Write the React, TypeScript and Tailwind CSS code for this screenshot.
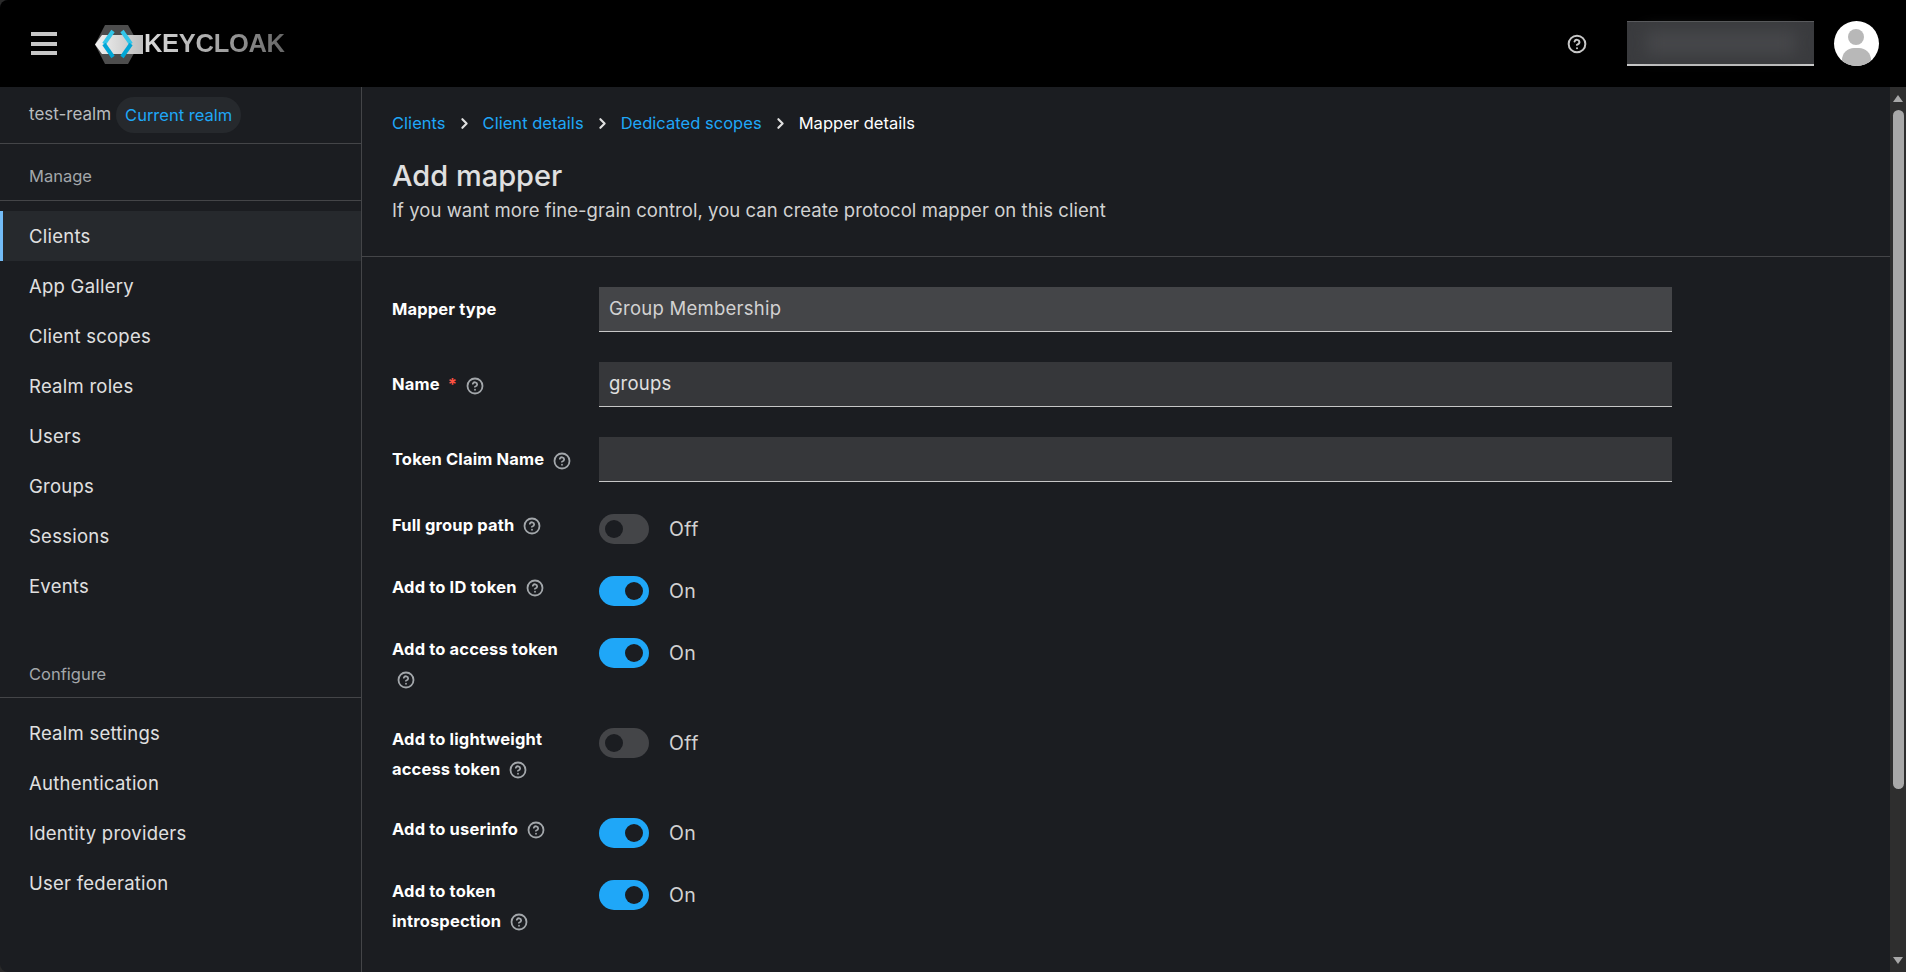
import { CircleHelp, ChevronRight } from "lucide-react";

const font = { fontFamily: "Inter, 'Noto Sans', sans-serif" };

const manageLinks = ["Clients", "App Gallery", "Client scopes", "Realm roles", "Users", "Groups", "Sessions", "Events"];
const configureLinks = ["Realm settings", "Authentication", "Identity providers", "User federation"];

function Logo() {
  return (
    <div className="flex items-center">
      <svg width="48" height="40" viewBox="0 0 48 40" className="shrink-0">
        <defs>
          <linearGradient id="band" x1="0" x2="1" y1="0" y2="0">
            <stop offset="0" stopColor="#f2f2f2" />
            <stop offset="1" stopColor="#bdbdbd" />
          </linearGradient>
        </defs>
        <path d="M10 1H33L44 20.5L33 40H10L0 20.5Z" fill="#4d4d4d" />
        <path d="M0 20.5L7 11H48V30H7Z" fill="url(#band)" />
        <path d="M18 7L9 20" fill="none" stroke="#33c6e9" strokeWidth="4" />
        <path d="M9 20L18 33" fill="none" stroke="#00a6d6" strokeWidth="4" />
        <path d="M27 7L36 20" fill="none" stroke="#33c6e9" strokeWidth="4" />
        <path d="M36 20L27 33" fill="none" stroke="#00a6d6" strokeWidth="4" />
      </svg>
      <span
        className="ml-px bg-gradient-to-r from-[#dcdcdc] via-[#a8a8a8] to-[#666666] bg-clip-text text-[25.5px] font-bold leading-none tracking-[-0.3px] text-transparent"
        style={{ fontFamily: "'Liberation Sans', sans-serif" }}
      >
        KEYCLOAK
      </span>
    </div>
  );
}

function Header() {
  return (
    <header className="flex h-[87px] shrink-0 items-center bg-black pl-[31px] pr-[27px]">
      <div className="flex h-[23px] w-[26px] flex-col justify-between">
        <div className="h-1 bg-[#c7c7c7]" />
        <div className="h-1 bg-[#c7c7c7]" />
        <div className="h-1 bg-[#c7c7c7]" />
      </div>
      <div className="ml-[38px]">
        <Logo />
      </div>
      <CircleHelp className="ml-auto h-5 w-5 text-[#c7c7c7]" strokeWidth={2.4} />
      <div className="ml-10 flex h-[45px] w-[187px] items-center justify-center border-t border-[#5a5b5e] border-b-2 border-b-[#c7c7c7] bg-[#3a3b3e]">
        <div className="h-6 w-[150px] bg-[#46474a] blur-sm" />
      </div>
      <div className="relative ml-[20px] h-[45px] w-[45px] overflow-hidden rounded-full bg-white">
        <div className="absolute left-[14px] top-[8px] h-[16px] w-[16px] rounded-full bg-[#b8b8b8]" />
        <div className="absolute left-[8px] top-[27px] h-[22px] w-[29px] rounded-t-[12px] bg-[#b8b8b8]" />
      </div>
    </header>
  );
}

function NavItem({ label, active }: { label: string; active?: boolean }) {
  return (
    <div
      className={`flex h-[50px] items-center border-l-[3px] pl-[26px] pt-[2px] text-[18.5px] tracking-[0.25px] text-[#e0e0e0] ${
        active ? "border-[#73bcf7] bg-[#26292d]" : "border-transparent"
      }`}
    >
      {label}
    </div>
  );
}

function Sidebar() {
  return (
    <aside className="flex w-[362px] shrink-0 flex-col border-r border-[#444548]">
      <div className="flex h-[57px] shrink-0 items-center gap-[5px] border-b border-[#444548] pl-[29px]">
        <span className="text-[17px] text-[#b8bbbe]">test-realm</span>
        <span className="rounded-full bg-[#26292d] px-[9px] py-[6px] text-[16.5px] leading-6 text-[#1fa7f8]">Current realm</span>
      </div>
      <div className="flex h-[57px] shrink-0 items-center border-b border-[#444548] pl-[29px] pt-2 text-[16.5px] text-[#a3a7ab]">
        Manage
      </div>
      <div className="mt-[10px]">
        {manageLinks.map((l) => (
          <NavItem key={l} label={l} active={l === "Clients"} />
        ))}
      </div>
      <div className="mt-[46px] h-[41px] shrink-0 border-b border-[#444548] pl-[29px] pt-[5px] text-[16.5px] leading-6 text-[#a3a7ab]">
        Configure
      </div>
      <div className="mt-[10px]">
        {configureLinks.map((l) => (
          <NavItem key={l} label={l} />
        ))}
      </div>
    </aside>
  );
}

function Help({ className = "" }: { className?: string }) {
  return <CircleHelp className={`inline-block h-[18px] w-[18px] shrink-0 text-[#a3a7ab] ${className}`} strokeWidth={2.4} />;
}

function TextRow({ label, value, readOnly, required, help, className = "mb-[30px]" }: { label: string; value: string; readOnly?: boolean; required?: boolean; help?: boolean; className?: string }) {
  return (
    <div className={`flex items-center ${className}`}>
      <div className="flex w-[207px] shrink-0 items-center text-[16.5px] font-bold tracking-[0.15px] text-white">
        {label}
        {required && <span className="ml-[8px] text-[#fe5142]">*</span>}
        {help && <Help className="ml-[9px] mt-[2px]" />}
      </div>
      <div
        className={`flex h-[45px] w-[1073px] items-center border-b border-[#c7c7c7] pl-[10px] text-[18.5px] tracking-[0.25px] ${
          readOnly ? "bg-[#444548] text-[#d2d2d2]" : "bg-[#36373a] text-[#e0e0e0]"
        }`}
      >
        {value}
      </div>
    </div>
  );
}

function ToggleRow({ lines, on, iconOwnLine, tall }: { lines: string[]; on: boolean; iconOwnLine?: boolean; tall?: boolean }) {
  return (
    <div className={`flex items-start ${tall ? "mb-[30px]" : "mb-[32px]"}`}>
      <div className="-mt-1 w-[207px] shrink-0 pb-1 text-[16.5px] font-bold leading-[30px] tracking-[0.15px] text-white">
        {lines.map((line, i) => (
          <div key={line} className="flex h-[30px] items-center">
            {line}
            {i === lines.length - 1 && !iconOwnLine && <Help className="ml-[9px] mt-[2px]" />}
          </div>
        ))}
        {iconOwnLine && (
          <div className="flex h-[30px] items-center pl-[5px]">
            <Help className="mt-[2px]" />
          </div>
        )}
      </div>
      <div className={`flex h-[30px] w-[50px] shrink-0 items-center rounded-full px-[6px] ${on ? "justify-end bg-[#1fa7f8]" : "bg-[#444548]"}`}>
        <div className="h-[18px] w-[18px] rounded-full bg-[#1b1d21]" />
      </div>
      <span className="ml-[20px] text-[19.5px] leading-[30px] tracking-[0.4px] text-[#d2d2d2]">{on ? "On" : "Off"}</span>
    </div>
  );
}

function Crumb({ label }: { label: string }) {
  return (
    <>
      <span className="text-[#1fa7f8]">{label}</span>
      <ChevronRight className="mx-[10px] h-[17px] w-[17px] text-[#e0e0e0]" strokeWidth={3} />
    </>
  );
}

function Scrollbar() {
  return (
    <div className="flex w-4 shrink-0 flex-col items-center bg-[#2e2e2e]">
      <div className="mt-2 h-0 w-0 border-x-[5px] border-b-[7px] border-x-transparent border-b-[#a8a8a8]" />
      <div className="ml-px mt-[8px] h-[679px] w-[11px] rounded-full bg-[#a8a8a8]" />
      <div className="mb-2 mt-auto h-0 w-0 border-x-[5px] border-t-[7px] border-x-transparent border-t-[#a8a8a8]" />
    </div>
  );
}

export default function App() {
  return (
    <div className="h-[972px] w-[1906px] overflow-hidden bg-[#2a2a2a]" style={font}>
      <div className="flex h-full flex-col overflow-hidden rounded-l-lg bg-[#1b1d21]">
        <Header />
        <div className="flex min-h-0 flex-1">
          <Sidebar />
          <main className="flex min-w-0 flex-1">
            <div className="min-w-0 flex-1 overflow-hidden">
              <div className="h-[170px] border-b border-[#444548] pl-[30px] pt-[24px]">
                <nav className="flex h-6 items-center text-[16.5px] tracking-[0.03px]">
                  <Crumb label="Clients" />
                  <Crumb label="Client details" />
                  <Crumb label="Dedicated scopes" />
                  <span className="text-white">Mapper details</span>
                </nav>
                <h1 className="mt-[23px] text-[29px] font-medium leading-[36px] text-[#e0e0e0]">Add mapper</h1>
                <p className="mt-[4px] text-[18.5px] leading-6 tracking-[0.05px] text-[#d2d2d2]">
                  If you want more fine-grain control, you can create protocol mapper on this client
                </p>
              </div>
              <form className="pl-[30px] pt-[30px]">
                <TextRow label="Mapper type" value="Group Membership" readOnly />
                <TextRow label="Name" value="groups" required help />
                <TextRow label="Token Claim Name" value="" help className="mb-[32px]" />
                <ToggleRow lines={["Full group path"]} on={false} />
                <ToggleRow lines={["Add to ID token"]} on />
                <ToggleRow lines={["Add to access token"]} on iconOwnLine tall />
                <ToggleRow lines={["Add to lightweight", "access token"]} on={false} tall />
                <ToggleRow lines={["Add to userinfo"]} on />
                <ToggleRow lines={["Add to token", "introspection"]} on tall />
              </form>
            </div>
            <Scrollbar />
          </main>
        </div>
      </div>
    </div>
  );
}
